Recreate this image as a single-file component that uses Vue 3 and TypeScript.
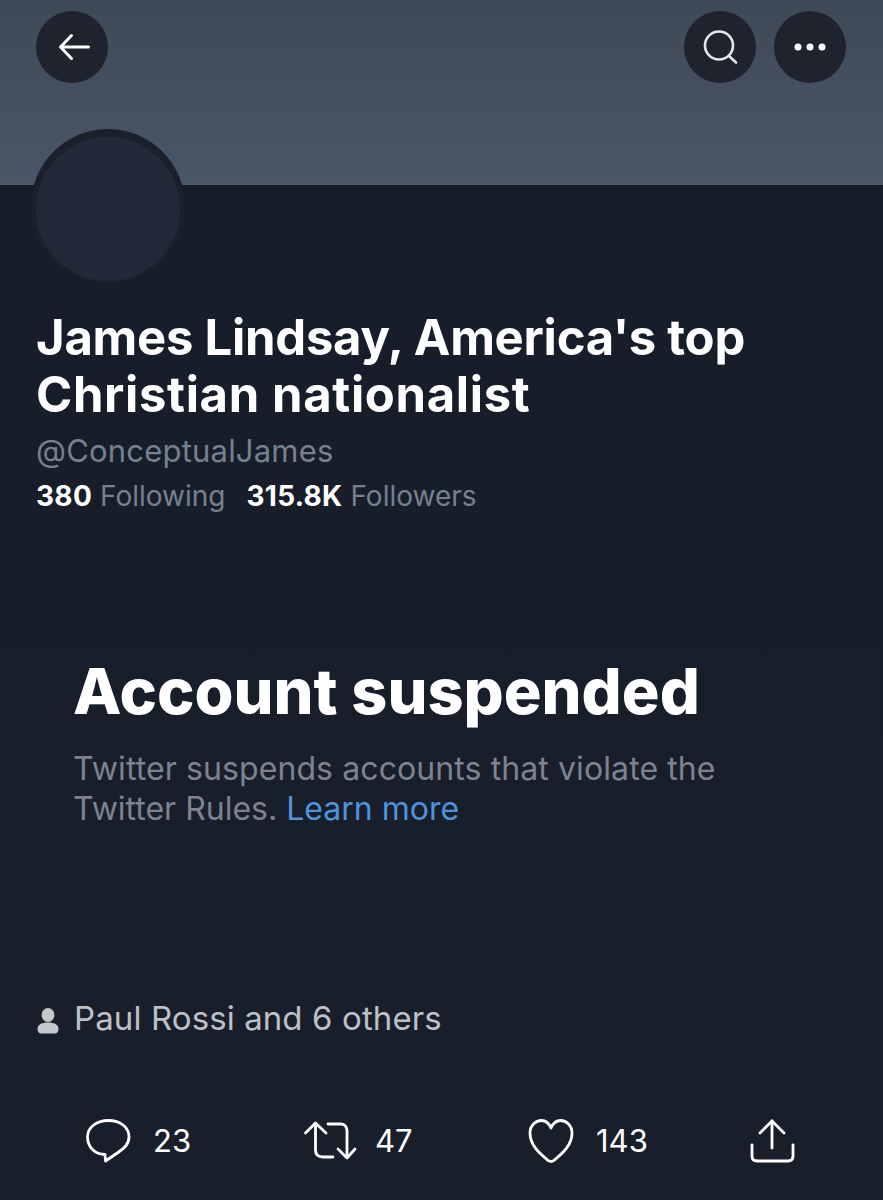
<template>
  <main class="profile">
    <header class="profile__banner">
      <button class="round-btn" type="button" aria-label="Back">
        <svg class="back-icon" width="36" height="36" viewBox="0 0 36 36" fill="none" stroke="#fff" stroke-width="3" stroke-linecap="round" stroke-linejoin="round">
          <path d="M5.5 18 H33.5 M16.5 6.5 L5.5 18 L16.5 29.5" />
        </svg>
      </button>
      <div class="profile__actions">
        <button class="round-btn" type="button" aria-label="Search">
          <svg width="36" height="36" viewBox="0 0 36 36" fill="none" stroke="#e4e6e9" stroke-width="2.6" stroke-linecap="round">
            <circle cx="17" cy="16.5" r="14" />
            <path d="M27 27 L34 33.5" />
          </svg>
        </button>
        <button class="round-btn" type="button" aria-label="More">
          <svg width="36" height="12" viewBox="0 0 36 12" fill="#fff">
            <circle cx="6" cy="6" r="3.5" />
            <circle cx="18" cy="6" r="3.5" />
            <circle cx="30" cy="6" r="3.5" />
          </svg>
        </button>
      </div>
    </header>

    <div class="profile__avatar"><span /></div>

    <section class="profile__info">
      <h1>James Lindsay, America's top<br /><span>Christian nationalist</span></h1>
      <p class="profile__handle">@ConceptualJames</p>
      <p class="profile__stats">
        <span><b>380</b> Following</span>
        <span><b>315.8K</b> Followers</span>
      </p>
    </section>

    <section class="suspended">
      <h2>Account suspended</h2>
      <p>Twitter suspends accounts that violate the<br />Twitter Rules. <a href="#">Learn more</a></p>
    </section>

    <div class="liked-by">
      <svg class="liked-by__icon" width="22" height="26" viewBox="0 0 22 26" fill="#c4c7cc">
        <ellipse cx="11" cy="7" rx="6.4" ry="7" />
        <path d="M0.5 21 C0.5 16.5 5 14.5 11 14.5 C17 14.5 21.5 16.5 21.5 21 C21.5 24 20 25.5 17.5 25.5 H4.5 C2 25.5 0.5 24 0.5 21 Z" />
      </svg>
      <span>Paul Rossi and 6 others</span>
    </div>

    <footer class="actions">
      <div v-for="item in actions" :key="item.label" class="actions__item" :style="{ width: item.width + 'px' }">
        <svg :width="item.iconWidth" height="46" :viewBox="`0 0 ${item.iconWidth} 46`" fill="none" stroke="#fff" stroke-width="2.8" stroke-linecap="round" stroke-linejoin="round">
          <path v-for="d in item.paths" :key="d" :d="d" />
        </svg>
        <span v-if="item.count">{{ item.count }}</span>
      </div>
    </footer>
  </main>
</template>

<script setup lang="ts">
interface ActionItem {
  label: string
  count?: number
  width: number
  iconWidth: number
  paths: string[]
}

const actions: ActionItem[] = [
  {
    label: 'reply',
    count: 23,
    width: 219,
    iconWidth: 46,
    paths: ['M23.5 2.5 C35 2.5 44 9 44 19 C44 27 38 31 33 34.5 L20.5 43 L20 36.5 C10 36.5 2.5 29 2.5 19 C2.5 9 12 2.5 23.5 2.5 Z'],
  },
  {
    label: 'retweet',
    count: 47,
    width: 224,
    iconWidth: 49,
    paths: [
      'M1.5 15 L11.5 5 L22 15',
      'M11.5 6 V32 C11.5 37 14 39 19 39 H29',
      'M24 6 H37 C41 6 43 9 43 13 V39',
      'M34 31 L43 40 L51 31',
    ],
  },
  {
    label: 'like',
    count: 143,
    width: 221,
    iconWidth: 46,
    paths: ['M23 43.5 C22 43.5 21 43 20 42.3 C11 35 2 27 2 15 C2 7.5 7.5 2.5 13.5 2.5 C18 2.5 21 5.5 23 10 C25 5.5 28 2.5 32.5 2.5 C38.5 2.5 44 7.5 44 15 C44 27 35 35 26 42.3 C25 43 24 43.5 23 43.5 Z'],
  },
  {
    label: 'share',
    width: 46,
    iconWidth: 46,
    paths: [
      'M23 3 V30',
      'M11 15 L23 3 L35 15',
      'M3 27 V38 C3 41.5 5 43 8 43 H39 C42 43 44 41.5 44 38 V27',
    ],
  },
]
</script>

<style>
html,
body {
  margin: 0;
  background: #1a1f2a;
}
</style>

<style scoped>
.profile {
  width: 883px;
  height: 1200px;
  overflow: hidden;
  background: linear-gradient(180deg, #161d2a 0%, #191f2a 100%);
  color: #fff;
  font-family: Inter, "Liberation Sans", sans-serif;
}

.profile__banner {
  display: flex;
  justify-content: space-between;
  align-items: flex-start;
  box-sizing: border-box;
  height: 185px;
  padding: 11px 37px 0 36px;
  background: linear-gradient(180deg, #3e4957 0%, #4a5768 100%);
}

.profile__actions {
  display: flex;
  gap: 18px;
}

.round-btn {
  display: flex;
  align-items: center;
  justify-content: center;
  width: 72px;
  height: 72px;
  padding: 0;
  border: 0;
  border-radius: 50%;
  background: #1e232d;
}

.back-icon {
  margin-left: 2px;
}

.profile__avatar {
  display: flex;
  align-items: center;
  justify-content: center;
  box-sizing: border-box;
  width: 154px;
  height: 154px;
  margin: -56px 0 0 31px;
  border-radius: 50%;
  background: #1a212d;
}

.profile__avatar span {
  width: 144px;
  height: 144px;
  margin-top: 6px;
  border-radius: 50%;
  background: #212a38;
}

.profile__info {
  margin: 26px 0 0 36px;
}

.profile__info h1 {
  margin: 0;
  font-size: 49px;
  font-weight: 700;
  line-height: 57px;
  letter-spacing: -0.25px;
}

.profile__info h1 span {
  letter-spacing: 0.65px;
}

.profile__handle {
  margin: 8px 0 0;
  color: #75818f;
  font-size: 31px;
  line-height: 40px;
  letter-spacing: 0.2px;
}

.profile__stats {
  display: flex;
  gap: 21px;
  margin: 7px 0 0;
  color: #75818f;
  font-size: 28px;
  line-height: 36px;
}

.profile__stats b {
  color: #fff;
  font-weight: 700;
  letter-spacing: 0.3px;
}

.suspended {
  margin: 143px 0 0 73px;
}

.suspended h2 {
  margin: 0;
  font-size: 63px;
  font-weight: 800;
  line-height: 68px;
}

.suspended p {
  margin: 24px 0 0;
  color: #7d838f;
  font-size: 32px;
  line-height: 40px;
}

.suspended p::first-line {
  letter-spacing: 0.1px;
}

.suspended a {
  color: #4f93dc;
  text-decoration: none;
}

.liked-by {
  display: flex;
  align-items: center;
  gap: 15px;
  margin: 168px 0 0 37px;
  color: #bdc1c7;
  font-size: 33px;
  line-height: 42px;
  letter-spacing: 0.1px;
}

.liked-by__icon {
  margin-top: 5px;
}

.actions {
  display: flex;
  margin: 79px 0 0 85px;
}

.actions__item {
  display: flex;
  align-items: center;
  gap: 22px;
  font-size: 31px;
  line-height: 46px;
}

.actions__item svg {
  overflow: visible;
}
</style>
